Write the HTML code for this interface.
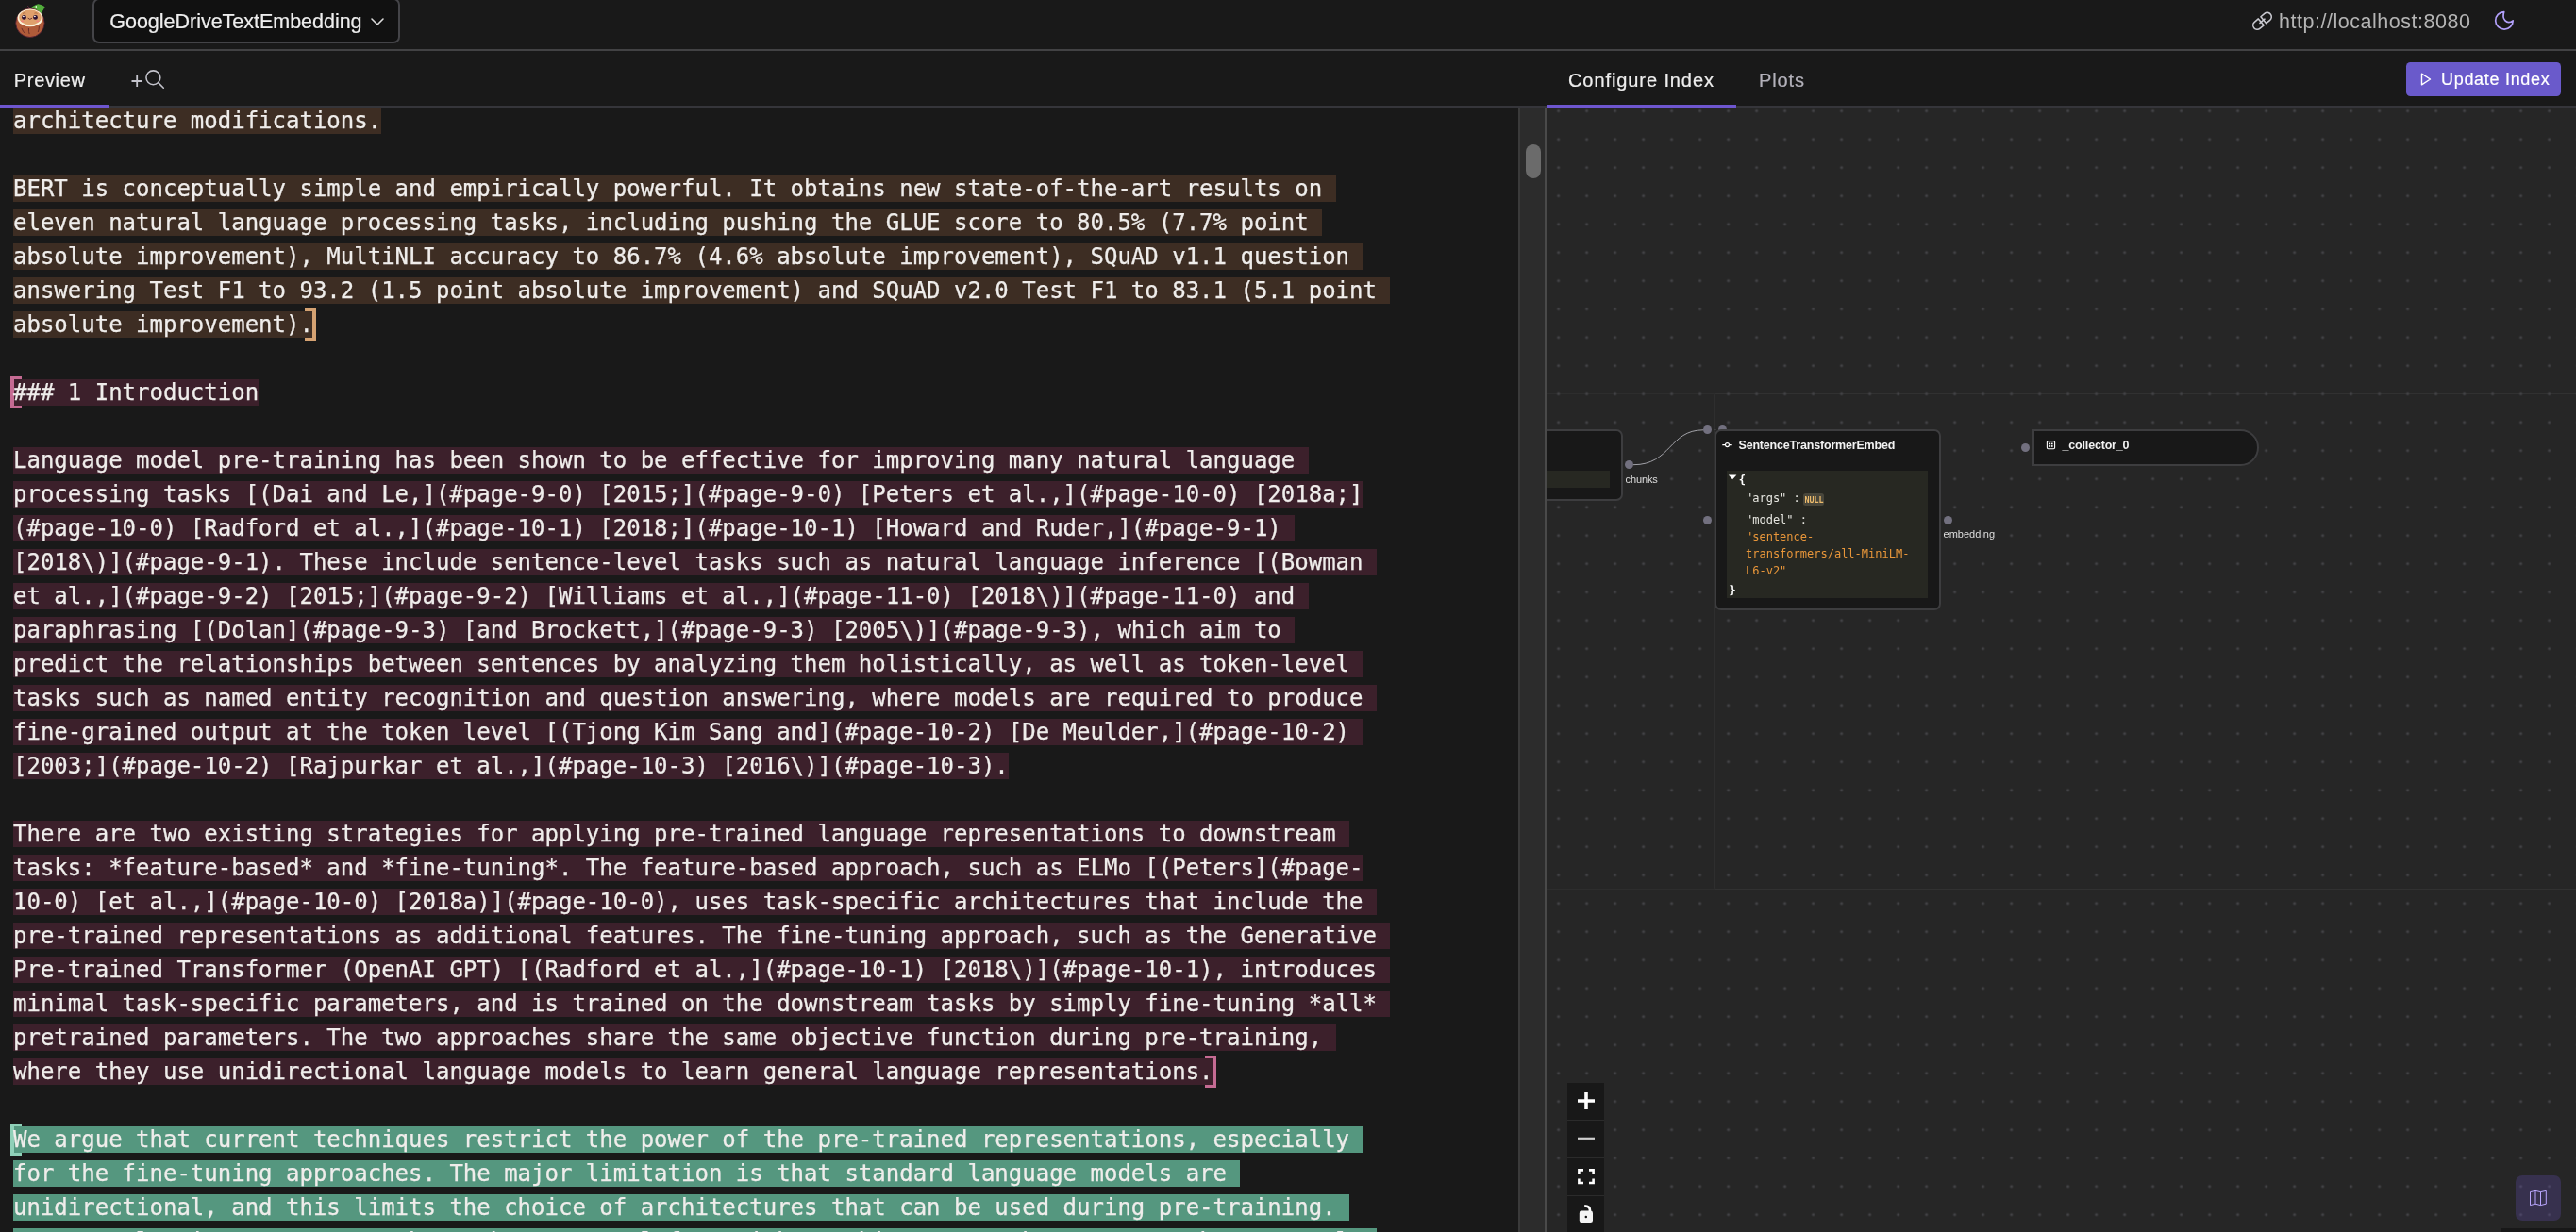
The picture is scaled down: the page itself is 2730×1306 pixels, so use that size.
<!DOCTYPE html>
<html lang="en"><head><meta charset="utf-8"><title>GoogleDriveTextEmbedding</title>
<style>
*{box-sizing:border-box}
html,body{margin:0;padding:0}
body{width:2730px;height:1306px;overflow:hidden;background:#191919;position:relative;font-family:"Liberation Sans",Arial,sans-serif;color:#eee}
.abs{position:absolute}
#topbar{left:0;top:0;width:2730px;height:54px;background:#191919;border-bottom:2px solid #424244}
#dd{left:98px;top:-2px;width:326px;height:48px;border:2px solid #444448;border-radius:7px;background:#111}
#ddt{left:116.3px;top:9px;font-size:21.5px;line-height:28px;color:#eee;white-space:nowrap;letter-spacing:-0.02px;-webkit-text-stroke:0.2px #eee}
#url{left:2415px;top:9px;font-size:21.5px;line-height:28px;color:#b4b4b4;white-space:nowrap;letter-spacing:0.52px}
#ltabs{left:0;top:54px;width:1639px;height:60px;border-bottom:2px solid #35353a;background:#191919}
#rtabs{left:1639px;top:54px;width:1091px;height:60px;border-bottom:2px solid #35353a;border-left:1px solid #333;background:#191919}
.tab{font-size:20px;line-height:28px;white-space:nowrap;color:#eee;-webkit-text-stroke:0.22px currentColor}
.ul{background:#6e56cf;height:3px;top:111px}
#text{left:0;top:114px;width:1609px;height:1192px;overflow:hidden;background:#191919}
.ln{position:absolute;left:14px;height:36px;line-height:36px;font-family:"DejaVu Sans Mono","Liberation Mono",monospace;font-size:24px;white-space:pre;color:#efedeb;margin-top:-114px;-webkit-text-stroke:0.25px #efedeb}
.h{padding:0}.t{position:relative;top:0}
.h.b{background:#3d2d23}.h.m{background:#3c202b}.h.g{background:#55977f}
.bk{position:absolute;top:1px;width:12px;height:34px;border-top:3px solid;border-bottom:3px solid}
.bk.bl{left:-3px;border-left:4px solid}
.bk.br{margin-left:-8.5px;border-right:4px solid}
.bk.b{border-color:#d5a272}.bk.m{border-color:#c56b93}.bk.g{border-color:#8fd0b8}
#sb{left:1609px;top:114px;width:30px;height:1192px;background:#2c2c2c;border-left:2px solid #3a3a3a;border-right:2px solid #4a4a4a}
#thumb{left:1617px;top:153px;width:16px;height:36px;border-radius:8px;background:#6b6b6b}
#canvas{left:1639px;top:114px;width:1091px;height:1192px;background-color:#262626;overflow:hidden}
#dots{left:0;top:0;width:1091px;height:1192px}
.node{background:#181818;border:2px solid #3d3d3f;border-radius:7px}
.hd{width:9.2px;height:9.2px;border-radius:50%;background:#72707f}
.lbl{font-size:11px;line-height:14px;color:#ddd;white-space:nowrap}
.json{background:#272822;font-family:"DejaVu Sans Mono","Liberation Mono",monospace;font-size:12px;color:#e6e6e0}
.jl{position:absolute;white-space:pre;line-height:18px;height:18px}
.str{color:#e8963a}
.ttl{font-size:12.5px;line-height:18px;font-weight:bold;color:#f2f2f2;white-space:nowrap;letter-spacing:-0.19px}
.ctl{left:22px;width:39px;height:39px;background:#181818}
#upd{left:2550px;top:66px;width:164px;height:36px;border-radius:4.5px;background:#6a5acb}
#wrap{position:absolute;left:0;top:0;width:2730px;height:1306px;will-change:transform}
</style></head><body><div id="wrap">
<div id="topbar" class="abs"></div>

<svg class="abs" style="left:14px;top:2px" width="38" height="40" viewBox="0 0 38 40">
<path d="M15.3 4.3 L17.8 6.6" stroke="#6a2844" stroke-width="0.8" fill="none" stroke-linecap="round"/>
<path d="M18.3 6.8 C20.5 4.6 23.5 2.9 26.4 2.2 C29 2.6 31.5 3.8 33.6 5.2 C32.6 7.6 31.2 9.9 29.6 11.9 C26.4 9.4 22.4 7.6 18.3 6.8 Z" fill="#52ad3c"/>
<ellipse cx="24.3" cy="5" rx="0.8" ry="0.9" fill="#e9ffe0"/>
<circle cx="17.9" cy="22.3" r="15.2" fill="#b05b39" stroke="#4c1a33" stroke-width="0.8"/>
<path d="M9 28.2 Q10.3 31.6 12.4 33.4 M16.4 28.4 Q16.2 31.6 17 33.7 M27.4 26.2 Q27.4 29.4 26.4 31.6" stroke="#5c2222" stroke-width="0.8" fill="none" stroke-linecap="round"/>
<ellipse cx="18" cy="16.9" rx="13.4" ry="9.3" fill="#fbf2da"/>
<ellipse cx="18" cy="16.4" rx="11.7" ry="7.9" fill="#dfa06c"/>
<path d="M10.3 12.2 Q11.6 11.2 12.9 12 M22.7 12 Q24 11.2 25.3 12.2" stroke="#a8683e" stroke-width="0.9" fill="none" stroke-linecap="round"/>
<circle cx="11.5" cy="16.4" r="2.4" fill="#2c1030"/>
<circle cx="23.5" cy="16.4" r="2.4" fill="#2c1030"/>
<ellipse cx="10.9" cy="15.5" rx="0.9" ry="0.7" fill="#fff"/>
<ellipse cx="22.9" cy="15.5" rx="0.9" ry="0.7" fill="#fff"/>
<path d="M15.9 17.4 Q17.8 19.7 19.8 17.4" stroke="#4a1c28" stroke-width="0.8" fill="none" stroke-linecap="round"/>
<ellipse cx="9.8" cy="20.4" rx="1.6" ry="0.8" fill="#f0807c"/>
<ellipse cx="25.8" cy="20.4" rx="1.6" ry="0.8" fill="#f0807c"/>
</svg>

<div id="dd" class="abs"></div>
<div id="ddt" class="abs">GoogleDriveTextEmbedding</div>
<svg class="abs" style="left:392px;top:17px" width="16" height="12" viewBox="0 0 16 12"><path d="M2 3 L8 9 L14 3" fill="none" stroke="#ddd" stroke-width="1.6" stroke-linecap="round" stroke-linejoin="round"/></svg>

<svg class="abs" style="left:2385px;top:10px" width="26" height="26" viewBox="0 0 26 26">
<g transform="translate(12.5 12.3) rotate(-40)" fill="none" stroke="#c9c9d0" stroke-width="1.55" stroke-linejoin="round" stroke-linecap="round">
<path d="M-1.7 -4.5 H-6.9 A4.5 4.5 0 0 0 -6.9 4.5 H-1.7 Z"/>
<path d="M1.7 -4.5 H6.9 A4.5 4.5 0 0 1 6.9 4.5 H1.7 Z"/>
<path d="M-3.3 0 H3.3"/>
</g></svg>
<svg class="abs" style="left:2641px;top:10px" width="26" height="26" viewBox="0 0 26 26">
<path d="M12.75 2.6 A9.25 9.25 0 1 0 22.2 11.8 C15.65 16.9 10.05 10 12.75 2.6 Z" fill="none" stroke="#b2a0fa" stroke-width="1.7" stroke-linejoin="round"/>
</svg>

<div id="url" class="abs">http://localhost:8080</div>
<div id="ltabs" class="abs"></div>
<div id="rtabs" class="abs"></div>
<div class="abs tab" style="left:14.8px;top:71px;letter-spacing:0.67px" id="tprev">Preview</div>
<div class="abs ul" style="left:0;width:115px"></div>

<svg class="abs" style="left:136px;top:70px" width="42" height="28" viewBox="0 0 42 28">
<path d="M3.5 16 H14.9 M9.2 10.1 V21.9" stroke="#c4c4cc" stroke-width="1.8" fill="none"/>
<circle cx="26.4" cy="12.3" r="7.45" fill="none" stroke="#c4c4cc" stroke-width="1.55"/>
<path d="M31.7 17.6 L37.3 23.2" stroke="#c4c4cc" stroke-width="1.55" stroke-linecap="round"/>
</svg>

<div class="abs tab" style="left:1662px;top:71px;letter-spacing:0.91px" id="tconf">Configure Index</div>
<div class="abs ul" style="left:1639px;width:201px"></div>
<div class="abs tab" style="left:1864px;top:71px;color:#b3b1ba;letter-spacing:0.9px" id="tplots">Plots</div>
<div id="upd" class="abs"></div>
<div class="abs" id="updt" style="left:2587px;top:71px;font-size:18px;line-height:26px;color:#fff;white-space:nowrap;font-weight:normal;letter-spacing:0.7px;-webkit-text-stroke:0.2px #fff">Update Index</div>
<svg class="abs" style="left:2562px;top:75px" width="18" height="18" viewBox="0 0 18 18"><path d="M4.5 3.2 L13.5 9 L4.5 14.8 Z" fill="none" stroke="#fff" stroke-width="1.4" stroke-linejoin="round"/></svg>
<div id="text" class="abs">
<div class="ln" style="top:110px"><span class="h b"><span class="t">architecture modifications.</span></span></div>
<div class="ln" style="top:182px"><span class="h b"><span class="t">BERT is conceptually simple and empirically powerful. It obtains new state-of-the-art results on </span></span></div>
<div class="ln" style="top:218px"><span class="h b"><span class="t">eleven natural language processing tasks, including pushing the GLUE score to 80.5% (7.7% point </span></span></div>
<div class="ln" style="top:254px"><span class="h b"><span class="t">absolute improvement), MultiNLI accuracy to 86.7% (4.6% absolute improvement), SQuAD v1.1 question </span></span></div>
<div class="ln" style="top:290px"><span class="h b"><span class="t">answering Test F1 to 93.2 (1.5 point absolute improvement) and SQuAD v2.0 Test F1 to 83.1 (5.1 point </span></span></div>
<div class="ln" style="top:326px"><span class="h b"><span class="t">absolute improvement).</span></span><i class="bk br b"></i></div>
<div class="ln" style="top:398px"><i class="bk bl m"></i><span class="h m"><span class="t">### 1 Introduction</span></span></div>
<div class="ln" style="top:470px"><span class="h m"><span class="t">Language model pre-training has been shown to be effective for improving many natural language </span></span></div>
<div class="ln" style="top:506px"><span class="h m"><span class="t">processing tasks [(Dai and Le,](#page-9-0) [2015;](#page-9-0) [Peters et al.,](#page-10-0) [2018a;]</span></span></div>
<div class="ln" style="top:542px"><span class="h m"><span class="t">(#page-10-0) [Radford et al.,](#page-10-1) [2018;](#page-10-1) [Howard and Ruder,](#page-9-1) </span></span></div>
<div class="ln" style="top:578px"><span class="h m"><span class="t">[2018\)](#page-9-1). These include sentence-level tasks such as natural language inference [(Bowman </span></span></div>
<div class="ln" style="top:614px"><span class="h m"><span class="t">et al.,](#page-9-2) [2015;](#page-9-2) [Williams et al.,](#page-11-0) [2018\)](#page-11-0) and </span></span></div>
<div class="ln" style="top:650px"><span class="h m"><span class="t">paraphrasing [(Dolan](#page-9-3) [and Brockett,](#page-9-3) [2005\)](#page-9-3), which aim to </span></span></div>
<div class="ln" style="top:686px"><span class="h m"><span class="t">predict the relationships between sentences by analyzing them holistically, as well as token-level </span></span></div>
<div class="ln" style="top:722px"><span class="h m"><span class="t">tasks such as named entity recognition and question answering, where models are required to produce </span></span></div>
<div class="ln" style="top:758px"><span class="h m"><span class="t">fine-grained output at the token level [(Tjong Kim Sang and](#page-10-2) [De Meulder,](#page-10-2) </span></span></div>
<div class="ln" style="top:794px"><span class="h m"><span class="t">[2003;](#page-10-2) [Rajpurkar et al.,](#page-10-3) [2016\)](#page-10-3).</span></span></div>
<div class="ln" style="top:866px"><span class="h m"><span class="t">There are two existing strategies for applying pre-trained language representations to downstream </span></span></div>
<div class="ln" style="top:902px"><span class="h m"><span class="t">tasks: *feature-based* and *fine-tuning*. The feature-based approach, such as ELMo [(Peters](#page-</span></span></div>
<div class="ln" style="top:938px"><span class="h m"><span class="t">10-0) [et al.,](#page-10-0) [2018a)](#page-10-0), uses task-specific architectures that include the </span></span></div>
<div class="ln" style="top:974px"><span class="h m"><span class="t">pre-trained representations as additional features. The fine-tuning approach, such as the Generative </span></span></div>
<div class="ln" style="top:1010px"><span class="h m"><span class="t">Pre-trained Transformer (OpenAI GPT) [(Radford et al.,](#page-10-1) [2018\)](#page-10-1), introduces </span></span></div>
<div class="ln" style="top:1046px"><span class="h m"><span class="t">minimal task-specific parameters, and is trained on the downstream tasks by simply fine-tuning *all* </span></span></div>
<div class="ln" style="top:1082px"><span class="h m"><span class="t">pretrained parameters. The two approaches share the same objective function during pre-training, </span></span></div>
<div class="ln" style="top:1118px"><span class="h m"><span class="t">where they use unidirectional language models to learn general language representations.</span></span><i class="bk br m"></i></div>
<div class="ln" style="top:1190px"><i class="bk bl g"></i><span class="h g"><span class="t">We argue that current techniques restrict the power of the pre-trained representations, especially </span></span></div>
<div class="ln" style="top:1226px"><span class="h g"><span class="t">for the fine-tuning approaches. The major limitation is that standard language models are </span></span></div>
<div class="ln" style="top:1262px"><span class="h g"><span class="t">unidirectional, and this limits the choice of architectures that can be used during pre-training. </span></span></div>
<div class="ln" style="top:1298px"><span class="h g"><span class="t">For example, in OpenAI GPT, the authors use a left-toright architecture, where every token can only </span></span></div>
</div>
<div id="sb" class="abs"></div>
<div id="thumb" class="abs"></div>
<div id="canvas" class="abs">
<svg id="dots" class="abs" width="1091" height="1192"><defs><pattern id="dp" x="-2.4" y="-11.4" width="30" height="30" patternUnits="userSpaceOnUse"><circle cx="15" cy="15" r="1.55" fill="#424245"/></pattern></defs><path d="M0 303.5 H1091 M0 828.5 H1091" stroke="#2d2d2d" stroke-width="1" fill="none"/><path d="M1100 303.5 H180 Q177.8 303.5 177.8 305.5 V826.5 Q177.8 828.5 180 828.5 H1100" stroke="#313131" stroke-width="1.2" fill="none"/><rect width="1091" height="1192" fill="url(#dp)"/><path d="M177.6 340.9 L179.4 341 L178.5 342.5 Z" fill="#cfcfcf"/>
<path d="M92 378.7 C 132 378.7, 130 341.8, 166 341.8" stroke="#a2a2a8" stroke-width="1" fill="none"/>
</svg>

<div class="abs hd" style="left:181.7px;top:337px"></div>
<div class="abs node" style="left:-10px;top:341px;width:91px;height:75.5px"></div>
<div class="abs json" style="left:-10px;top:385px;width:77px;height:18px"></div>
<div class="abs hd" style="left:83.1px;top:374.3px"></div>
<div class="abs lbl" id="lchunks" style="left:83.6px;top:386.5px;letter-spacing:-0.12px">chunks</div>
<div class="abs hd" style="left:165.6px;top:337.2px"></div>
<div class="abs hd" style="left:165.8px;top:432.7px"></div>
<div class="abs node" style="left:178px;top:341.3px;width:239.5px;height:191.3px"></div>
<svg class="abs" style="left:185px;top:351px" width="14" height="14" viewBox="0 0 14 14"><path d="M1.3 6.6 H4.6 M8.4 6.6 H11.7" stroke="#fff" stroke-width="1.1" fill="none"/><circle cx="6.5" cy="6.6" r="2" fill="none" stroke="#fff" stroke-width="1.1"/></svg>
<div class="abs ttl" id="tste" style="left:203.5px;top:349px">SentenceTransformerEmbed</div>
<div class="abs json" style="left:191px;top:384.7px;width:213.2px;height:135.1px"></div>
<div class="abs" style="left:195px;top:402.5px;width:1.4px;height:99px;background:#34352f"></div>
<svg class="abs" style="left:192px;top:389px" width="10" height="6" viewBox="0 0 10 6"><path d="M0.8 0.5 H9.4 L5.1 5.2 Z" fill="#fff"/></svg>
<div class="json" style="background:none">
<div class="jl" style="left:203.7px;top:385.6px;font-weight:bold;color:#fff">{</div>
<div class="jl" style="left:211px;top:405.2px">"args" :</div>
<div class="abs" style="left:272px;top:408.9px;width:22px;height:13.6px;border-radius:2.5px;background:#48463b"></div>
<div class="jl" id="jnull" style="left:273.4px;top:406.7px;font-size:8.4px;font-weight:bold;color:#ecbb6c">NULL</div>
<div class="jl" style="left:211px;top:427.8px">"model" :</div>
<div class="jl str" style="left:211px;top:445.6px">"sentence-</div>
<div class="jl str" style="left:211px;top:463.8px">transformers/all-MiniLM-</div>
<div class="jl str" style="left:211px;top:481.6px">L6-v2"</div>
<div class="jl" style="left:193.5px;top:502.6px;font-weight:bold;color:#fff">}</div>
</div>
<div class="abs hd" style="left:420.7px;top:432.6px"></div>
<div class="abs lbl" id="lemb" style="left:420.6px;top:444.9px">embedding</div>
<div class="abs hd" style="left:503.1px;top:356.2px"></div>
<div class="abs node" style="left:515.1px;top:341.1px;width:239.8px;height:38.8px;border-radius:0 19.4px 19.4px 0"></div>
<svg class="abs" style="left:529px;top:352px" width="12" height="12" viewBox="0 0 12 12"><rect x="1.4" y="1.6" width="8.2" height="8.2" rx="1.2" fill="none" stroke="#fff" stroke-width="1.1"/><rect x="3.4" y="3.6" width="1.7" height="1.7" fill="#fff"/><rect x="5.9" y="3.6" width="1.7" height="1.7" fill="#fff"/><rect x="3.4" y="6.1" width="1.7" height="1.7" fill="#fff"/><rect x="5.9" y="6.1" width="1.7" height="1.7" fill="#fff"/></svg>
<div class="abs ttl" id="tcol" style="left:546.6px;top:349px">_collector_0</div>
<div class="abs ctl" style="top:1034px"></div>
<div class="abs ctl" style="top:1074px"></div>
<div class="abs ctl" style="top:1114px"></div>
<div class="abs ctl" style="top:1154px"></div>
<div class="abs" style="left:22px;top:1073px;width:39px;height:1px;background:#2b2b2b"></div>
<div class="abs" style="left:22px;top:1113px;width:39px;height:1px;background:#2b2b2b"></div>
<div class="abs" style="left:22px;top:1153px;width:39px;height:1px;background:#2b2b2b"></div>
<svg class="abs" style="left:22px;top:1034px" width="39" height="158" viewBox="0 0 39 158">
<path d="M11 19 H29 M20 10 V28" stroke="#fff" stroke-width="3.6" fill="none"/>
<path d="M11 58.8 H29" stroke="#cfcfcf" stroke-width="2.2" fill="none"/>
<path d="M12.4 97 V92.4 H17 M23 92.4 H27.6 V97 M27.6 101.5 V106 H23 M17 106 H12.4 V101.5" stroke="#fff" stroke-width="2.6" fill="none"/>
<path d="M23.9 137.5 V134.6 C23.9 131.8 21.6 130.6 18.2 130.4" stroke="#fff" stroke-width="2.6" fill="none"/>
<rect x="12.8" y="135.6" width="14.2" height="12.5" rx="2.4" fill="#f4f4f4"/>
<circle cx="19.8" cy="141.9" r="1.25" fill="#111"/>
</svg>
<div class="abs" style="left:1026.8px;top:1132px;width:48.2px;height:48px;border-radius:7px;background:rgba(110,86,207,0.235)"></div>
<svg class="abs" style="left:1040px;top:1146px" width="22" height="20" viewBox="0 0 22 20">
<path d="M2.5 3.6 L8 2.4 L13.5 3.6 L19.3 2.4 V16.2 L13.5 17.6 L8 16.2 L2.5 17.6 Z M8 2.4 V16.2 M13.5 3.6 V17.6" fill="none" stroke="#baa7ff" stroke-width="1" stroke-linejoin="round"/>
</svg>
<div class="abs" style="left:1011px;top:1188px;width:80px;height:4px;background:#181818"></div>

</div>
</div></body></html>
